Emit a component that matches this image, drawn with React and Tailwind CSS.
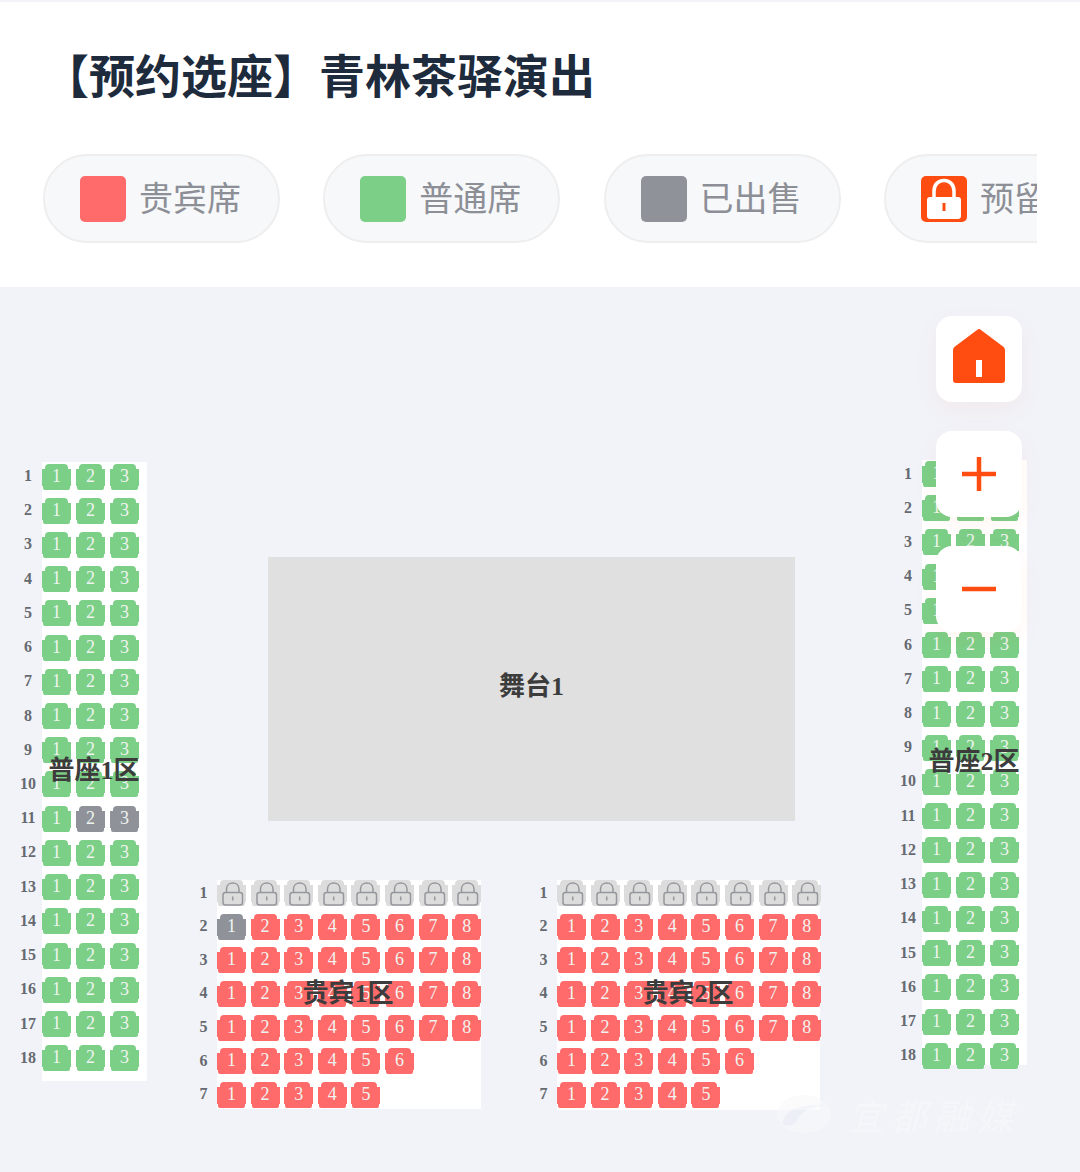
import React from "react";

const SEAT_PATH =
  "M7 0H22Q26 0 26 4V5H29V22H28V24Q28 26 26 26H3Q1 26 1 24V22H0V5H3V4Q3 0 7 0Z";

const range = (n) => Array.from({ length: n }, (_, i) => i + 1);

const Seat = ({ num, type }) => {
  const fill = {
    vip: "#ff6a6a",
    normal: "#7bcf87",
    sold: "#8f9299",
    locked: "#dcdcdc",
  }[type];

  return (
    <div className="relative w-[29px] h-[26px] shrink-0 flex items-center justify-center">
      <svg width="29" height="26" viewBox="0 0 29 26" className="absolute inset-0">
        <path d={SEAT_PATH} fill={fill} />
        {type === "locked" && (
          <g fill="none" stroke="#95979c" strokeWidth="1.5">
            <path d="M9.500 12.500V9C9.500 1 22 1 22 9V12.500" />
            <rect x="6" y="12.500" width="19.500" height="12.500" rx="2.500" />
            <path d="M15.700 16.500V20.500" />
          </g>
        )}
      </svg>
      {type !== "locked" && (
        <span className="relative pb-[2px] text-[18px] leading-none text-[#f0f4f0] font-['Liberation_Serif',serif]">
          {num}
        </span>
      )}
    </div>
  );
};

const SeatBlock = ({ className, columnsClass, rows, rowGap, seatGap, labelWidth, padding }) => (
  <div className={`absolute flex ${className}`}>
    <div className={`flex flex-col ${rowGap} ${padding} ${labelWidth}`}>
      {rows.map((_, i) => (
        <div
          key={i}
          className="h-[26px] shrink-0 pb-[1px] flex items-center justify-center text-[16px] font-bold text-[#666a70] font-['Liberation_Serif',serif]"
        >
          {i + 1}
        </div>
      ))}
    </div>
    <div className={`bg-white flex flex-col ${rowGap} ${padding} ${columnsClass}`}>
      {rows.map((row, i) => (
        <div key={i} className={`flex shrink-0 ${seatGap}`}>
          {row.map((type, j) => (
            <Seat key={j} num={j + 1} type={type} />
          ))}
        </div>
      ))}
    </div>
  </div>
);

const ZoneLabel = ({ className, children }) => (
  <div
    className={`absolute text-[26px] leading-none font-bold text-[#3c3c3c] -translate-x-1/2 -translate-y-1/2 whitespace-nowrap font-['Liberation_Serif','Noto_Sans_CJK_SC',serif] ${className}`}
  >
    {children}
  </div>
);

const sideRows = (soldRow) =>
  range(18).map((r) =>
    range(3).map((c) => (r === soldRow && c > 1 ? "sold" : "normal"))
  );

const vipRows = (soldFirst) =>
  [8, 8, 8, 8, 8, 6, 5].map((count, i) =>
    i === 0
      ? range(8).map(() => "locked")
      : range(count).map((c) => (soldFirst && i === 1 && c === 1 ? "sold" : "vip"))
  );

const LegendPill = ({ children, label }) => (
  <div className="shrink-0 w-[237px] h-[89px] rounded-[44px] bg-[#f7f8fa] border-2 border-[#eeeeef] flex items-center pl-[35px] gap-[13px]">
    {children}
    <span className="pb-[3px] text-[34px] leading-none text-[#8d8f97] whitespace-nowrap">{label}</span>
  </div>
);

const ControlButton = ({ children, className = "" }) => (
  <div
    className={`w-[86px] h-[86px] rounded-[16px] bg-white flex items-center justify-center shadow-[0_8px_24px_rgba(255,77,18,0.06)] ${className}`}
  >
    {children}
  </div>
);

export default function App() {
  return (
    <div className="relative w-[1080px] h-[1172px] overflow-hidden bg-[#f1f3f9] pt-[2px] font-['Noto_Sans_CJK_SC',sans-serif]">
      {/* Header */}
      <div className="h-[285px] bg-white pl-[43px] pr-[43px]">
        <h1 className="pt-[43px] h-[152px] text-[46px] leading-[56px] font-bold text-[#1d2b3c] whitespace-nowrap">
          【预约选座】青林茶驿演出
        </h1>
        <div className="flex gap-[43.300px] overflow-hidden w-[994px]">
          <LegendPill label="贵宾席">
            <div className="w-[46px] h-[46px] rounded-[5px] bg-[#ff6a6a]" />
          </LegendPill>
          <LegendPill label="普通席">
            <div className="w-[46px] h-[46px] rounded-[5px] bg-[#7bcf87]" />
          </LegendPill>
          <LegendPill label="已出售">
            <div className="w-[46px] h-[46px] rounded-[5px] bg-[#8f9299]" />
          </LegendPill>
          <LegendPill label="预留席">
            <svg width="46" height="46" viewBox="0 0 46 46" className="shrink-0">
              <rect width="46" height="46" rx="5" fill="#ff4d12" />
              <path d="M13 22V15C13 1 33 1 33 15V22" fill="none" stroke="#fff" strokeWidth="3.500" />
              <rect x="6" y="21" width="34" height="22" rx="3" fill="#fff" />
              <rect x="21.500" y="27" width="3" height="8" fill="#ff4d12" />
            </svg>
          </LegendPill>
        </div>
      </div>

      {/* Seat map canvas */}
      <div className="absolute left-[268px] top-[557px] w-[527px] h-[264px] pb-[6px] bg-[#e0e0e0] flex items-center justify-center text-[26px] font-bold text-[#3c3c3c] font-['Liberation_Serif','Noto_Sans_CJK_SC',serif]">
        舞台1
      </div>

      <SeatBlock
        className="left-[14px] top-[462px]"
        columnsClass="w-[105px]"
        labelWidth="w-[28px]"
        rows={sideRows(11)}
        rowGap="gap-[8.230px]"
        seatGap="gap-[5px]"
        padding="pt-[1.500px] pb-[10px]"
      />
      <SeatBlock
        className="left-[894px] top-[460px] h-[605px]"
        columnsClass="w-[105px]"
        labelWidth="w-[28px]"
        rows={sideRows(0)}
        rowGap="gap-[8.230px]"
        seatGap="gap-[5px]"
        padding="pt-[1px]"
      />
      <SeatBlock
        className="left-[190px] top-[880px]"
        columnsClass="w-[264px]"
        labelWidth="w-[27px]"
        rows={vipRows(true)}
        rowGap="gap-[7.670px]"
        seatGap="gap-[4.600px]"
        padding="pt-[0px] pb-[1px]"
      />
      <SeatBlock
        className="left-[530px] top-[880px]"
        columnsClass="w-[263px]"
        labelWidth="w-[27px]"
        rows={vipRows(false)}
        rowGap="gap-[7.670px]"
        seatGap="gap-[4.600px]"
        padding="pt-[0px] pb-[2px]"
      />

      <ZoneLabel className="left-[94px] top-[771px]">普座1区</ZoneLabel>
      <ZoneLabel className="left-[974px] top-[762px]">普座2区</ZoneLabel>
      <ZoneLabel className="left-[348px] top-[994px]">贵宾1区</ZoneLabel>
      <ZoneLabel className="left-[688px] top-[994px]">贵宾2区</ZoneLabel>

      {/* Map controls */}
      <div className="absolute left-[936px] top-[316px] flex flex-col gap-[29px]">
        <ControlButton className="pb-[6px]">
          <svg width="52" height="54" viewBox="0 0 52 54">
            <path
              d="M24 1a3 3 0 0 1 4 0L50 17.500a4 4 0 0 1 2 3.500V51a3 3 0 0 1-3 3H3a3 3 0 0 1-3-3V21a4 4 0 0 1 2-3.500Z"
              fill="#ff4d12"
            />
            <rect x="23" y="31" width="6" height="17" fill="#fff" />
          </svg>
        </ControlButton>
        <ControlButton>
          <svg width="34" height="34" viewBox="0 0 34 34">
            <path d="M0 17H34M17 0V34" stroke="#ff4d12" strokeWidth="4.500" />
          </svg>
        </ControlButton>
        <ControlButton>
          <svg width="34" height="6" viewBox="0 0 34 6">
            <path d="M0 3H34" stroke="#ff4d12" strokeWidth="4.500" />
          </svg>
        </ControlButton>
      </div>

      {/* Watermark */}
      <div className="absolute left-[776px] top-[1093px] flex items-center gap-[16px] opacity-50">
        <svg width="56" height="42" viewBox="0 0 56 42">
          <ellipse cx="28" cy="21" rx="27" ry="19" fill="#f8f9fb" />
          <path d="M6 30C10 16 26 10 48 12C34 14 22 20 20 30C14 34 9 33 6 30Z" fill="#e9edf5" />
        </svg>
        <span className="text-[36px] leading-[42px] italic tracking-[7px] text-[#f9fafc] whitespace-nowrap font-['Noto_Sans_CJK_SC',sans-serif]">
          宜都融媒
        </span>
      </div>
    </div>
  );
}
